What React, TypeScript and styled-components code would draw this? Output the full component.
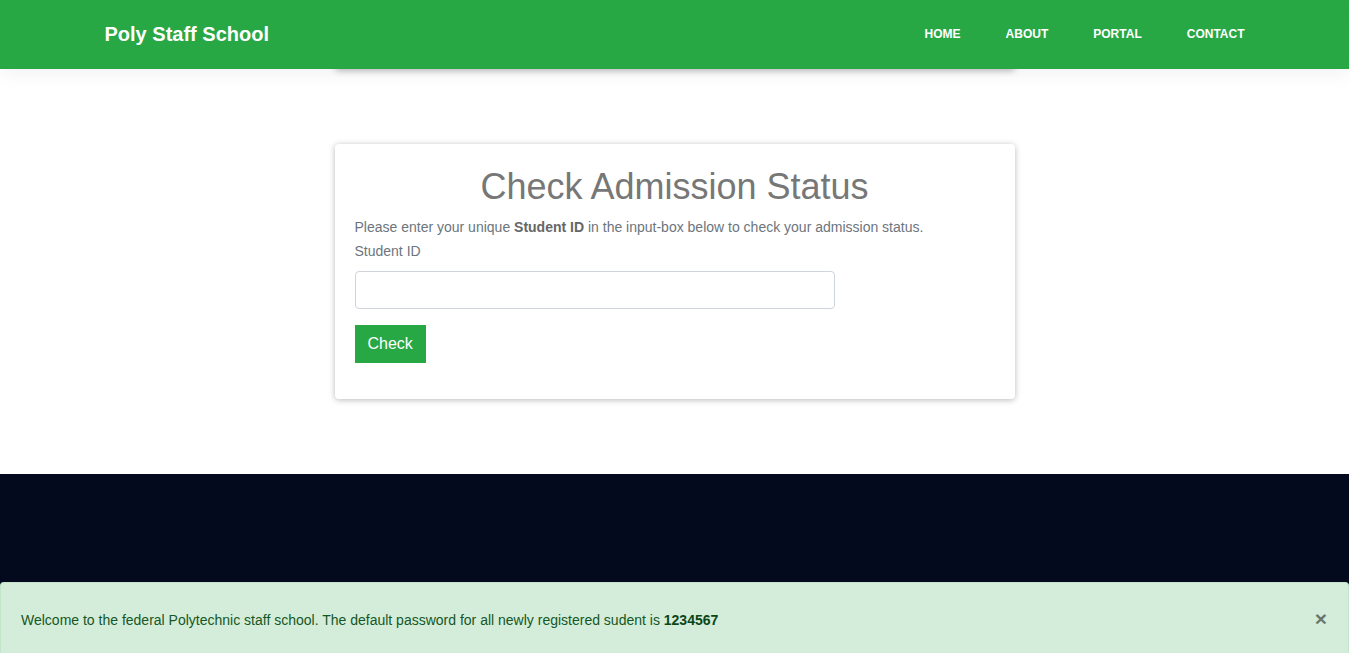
import React from "react";
import styled, { createGlobalStyle } from "styled-components";

const GlobalStyle = createGlobalStyle`
  html, body {
    margin: 0;
    padding: 0;
    background: #ffffff;
  }
  body {
    font-family: "Liberation Sans", Arial, Helvetica, sans-serif;
    color: #6c757d;
  }
  #root {
    width: calc(100% - 1px);
  }
  * { box-sizing: border-box; }
`;

const Navbar = styled.nav`
  position: relative;
  z-index: 2;
  height: 69px;
  background: #28a745;
  box-shadow: 0 4px 18px rgba(0, 0, 0, 0.06);
`;

const NavInner = styled.div`
  width: 1140px;
  height: 100%;
  margin: 0 auto;
  display: flex;
  align-items: center;
  justify-content: space-between;
`;

const Brand = styled.a`
  color: #ffffff;
  font-size: 20px;
  font-weight: 700;
  text-decoration: none;
  margin-top: 0;
`;

const NavLinks = styled.ul`
  list-style: none;
  margin: 0;
  padding: 0;
  display: flex;
  gap: 45px;
`;

const NavLink = styled.a`
  color: #ffffff;
  font-size: 12px;
  font-weight: 700;
  text-transform: uppercase;
  text-decoration: none;
  display: block;
  margin-top: -1px;
`;

const Shadowed = styled.div`
  position: relative;
  z-index: 1;
  width: 680px;
  height: 20px;
  margin: -20px auto 0;
  background: #ffffff;
  border-radius: 4px;
  box-shadow: 0 2px 6px rgba(0, 0, 0, 0.25);
`;

const Section = styled.section`
  padding: 75px 0 75px;
`;

const Card = styled.div`
  width: 680px;
  margin: 0 auto;
  background: #ffffff;
  border-radius: 4px;
  box-shadow: 0 1px 6px rgba(0, 0, 0, 0.28);
  padding: 21px 20px 36px;
`;

const Title = styled.h1`
  margin: 0 0 9px;
  text-align: center;
  font-size: 36px;
  font-weight: 400;
  line-height: 43px;
  color: #777777;
`;

const Lead = styled.p`
  margin: 0 0 3px;
  font-size: 14px;
  line-height: 21px;
  color: #6c757d;
  b { color: #666; }
`;

const Label = styled.label`
  display: block;
  font-size: 14px;
  line-height: 21px;
  margin-bottom: 9px;
  color: #6c757d;
`;

const Input = styled.input`
  display: block;
  width: 480px;
  height: 38px;
  border: 1px solid #ced4da;
  border-radius: 4px;
  padding: 6px 12px;
  font-size: 16px;
  outline: none;
  margin-bottom: 16px;
`;

const Button = styled.button`
  height: 38px;
  padding: 0 13px;
  border: none;
  background: #28a745;
  color: #ffffff;
  font-family: "Liberation Sans", Arial, sans-serif;
  font-size: 16px;
  cursor: pointer;
`;

const Footer = styled.footer`
  background: #040a1e;
  height: 200px;
`;

const Alert = styled.div`
  position: fixed;
  left: 0;
  right: 1px;
  bottom: 0;
  height: 71px;
  display: flex;
  align-items: center;
  justify-content: space-between;
  padding: 0 20px 0 20px;
  background: #d4edda;
  border: 1px solid #c3e6cb;
  border-bottom: none;
  border-radius: 4px 4px 0 0;
  color: #155724;
  font-size: 14px;
  b { color: #0b4618; }
`;

const AlertText = styled.span`
  margin-top: 4px;
`;

const Close = styled.button`
  background: none;
  border: none;
  padding: 0;
  margin-right: 1px;
  font-family: "Liberation Sans", Arial, sans-serif;
  font-size: 21px;
  font-weight: 700;
  line-height: 1;
  color: #000;
  opacity: 0.5;
  cursor: pointer;
`;

export default function App() {
  return (
    <>
      <GlobalStyle />
      <Navbar>
        <NavInner>
          <Brand href="#">Poly Staff School</Brand>
          <NavLinks>
            <li><NavLink href="#">Home</NavLink></li>
            <li><NavLink href="#">About</NavLink></li>
            <li><NavLink href="#">Portal</NavLink></li>
            <li><NavLink href="#">Contact</NavLink></li>
          </NavLinks>
        </NavInner>
      </Navbar>
      <Shadowed />
      <Section>
        <Card>
          <Title>Check Admission Status</Title>
          <Lead>
            Please enter your unique <b>Student ID</b> in the input-box below to check your admission status.
          </Lead>
          <Label htmlFor="sid">Student ID</Label>
          <Input id="sid" type="text" />
          <Button type="button">Check</Button>
        </Card>
      </Section>
      <Footer />
      <Alert>
        <AlertText>
          Welcome to the federal Polytechnic staff school. The default password for all newly registered sudent is <b>1234567</b>
        </AlertText>
        <Close aria-label="Close">×</Close>
      </Alert>
    </>
  );
}
